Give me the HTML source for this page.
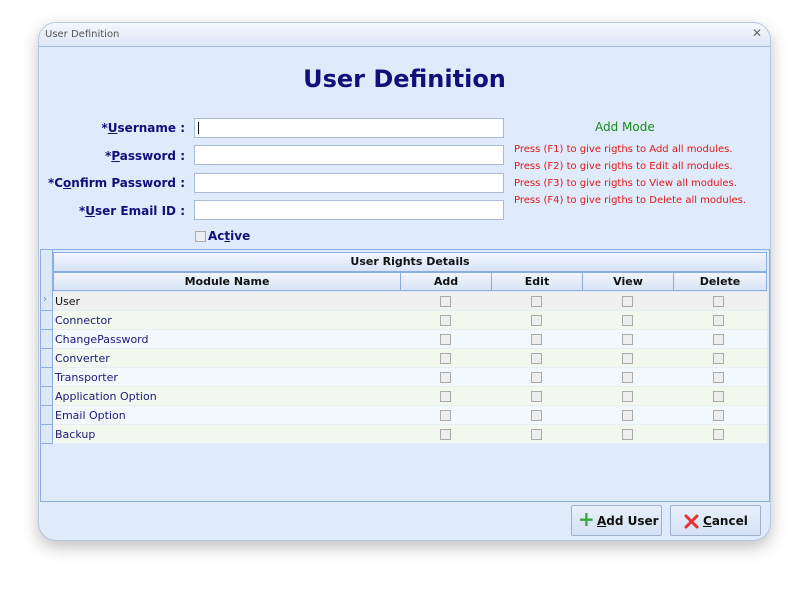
<!DOCTYPE html>
<html><head><style>
body{margin:0;width:809px;height:594px;background:#fff;font-family:"DejaVu Sans","Liberation Sans",sans-serif;position:relative;overflow:hidden}
.win{position:absolute;left:38px;top:22px;width:733px;height:519px;border-radius:18px;background:#dfeafb;box-shadow:0 6px 16px rgba(0,0,0,.25);overflow:hidden;border:1px solid #b8c8de;box-sizing:border-box}
.tb{position:absolute;left:0;top:0;right:0;height:23px;background:linear-gradient(#f4f8fd,#dbe6f5);font-size:10px;color:#555;border-bottom:1px solid #9fbde4}
.tb span{position:absolute;left:6px;top:6px}
.tb b{position:absolute;right:8px;top:3px;font-weight:normal;font-size:12px;color:#666}
.a{position:absolute}
.h1{left:0;width:100%;top:42px;text-align:center;font-size:24px;font-weight:bold;color:#10107a}
.lbl{font-size:12px;font-weight:bold;color:#10107a;text-align:right;width:150px;left:-4px}
.inp{left:155px;width:308px;height:18px;background:#fff;border:1px solid #a9bbd4}
.red{left:475px;font-size:10px;color:#e01818}
.grid{left:1px;top:226px;width:728px;height:251px;border:1px solid #8aaee0;background:#dfeafb}
.rh{position:absolute;left:0;top:0;width:11px;height:194px;background:#dce8f8;border-right:1px solid #8aaee0}
.hdr{position:absolute;background:linear-gradient(#f2f6fc,#d7e4f6);border:1px solid #8aaee0;box-sizing:border-box;font-size:11px;font-weight:bold;text-align:center;color:#111}
.row{position:absolute;left:12px;width:714px;height:19px;border-bottom:1px solid #e8eef6;box-sizing:border-box}
.row span{position:absolute;left:2px;top:3px;font-size:11px;color:#1a1a7a}
.cb{position:absolute;top:4px;width:9px;height:9px;border:1px solid #aaa;background:#eee}
.rm{position:absolute;left:0;width:11px;height:19px;border-bottom:1px solid #8aaee0;box-sizing:border-box;background:#dce8f8}
.btn{position:absolute;top:482px;width:91px;height:31px;border:1px solid #9fb2cc;border-radius:2px;background:linear-gradient(#e8f0fb,#d4e2f4);box-sizing:border-box;font-size:12px;font-weight:bold;color:#111}
</style></head><body>
<div class="win">
<div class="tb"><span>User Definition</span><b>✕</b></div>
<div class="a h1">User Definition</div>
<div class="a lbl" style="top:98px">*<u>U</u>sername :</div>
<div class="a lbl" style="top:126px">*<u>P</u>assword :</div>
<div class="a lbl" style="top:153px">*C<u>o</u>nfirm Password :</div>
<div class="a lbl" style="top:181px">*<u>U</u>ser Email ID :</div>
<div class="a inp" style="top:95px"><div style="position:absolute;left:3px;top:3px;width:1px;height:12px;background:#000"></div></div>
<div class="a inp" style="top:122px"></div>
<div class="a inp" style="top:150px"></div>
<div class="a inp" style="top:177px"></div>
<div class="a" style="left:156px;top:208px;width:9px;height:9px;border:1px solid #aaa;background:#eee"></div>
<div class="a" style="left:169px;top:206px;font-size:12px;font-weight:bold;color:#10107a">Ac<u>t</u>ive</div>
<div class="a" style="left:556px;top:97px;font-size:12px;color:#1a8a1a">Add Mode</div>
<div class="a red" style="top:121px">Press (F1) to give rigths to Add all modules.</div>
<div class="a red" style="top:138px">Press (F2) to give rigths to Edit all modules.</div>
<div class="a red" style="top:155px">Press (F3) to give rigths to View all modules.</div>
<div class="a red" style="top:172px">Press (F4) to give rigths to Delete all modules.</div>
<div class="a grid">
<div class="rh"></div>
<div class="hdr" style="left:12px;top:2px;width:714px;height:20px;line-height:18px">User Rights Details</div>
<div class="hdr" style="left:12px;top:22px;width:348px;height:19px;line-height:17px">Module Name</div>
<div class="hdr" style="left:359px;top:22px;width:92px;height:19px;line-height:17px">Add</div>
<div class="hdr" style="left:450px;top:22px;width:92px;height:19px;line-height:17px">Edit</div>
<div class="hdr" style="left:541px;top:22px;width:92px;height:19px;line-height:17px">View</div>
<div class="hdr" style="left:632px;top:22px;width:94px;height:19px;line-height:17px">Delete</div>
<div id="rows"></div>
</div>
<div class="btn" style="left:532px"><span style="position:absolute;left:6px;top:3px;color:#3aaa3a;font-size:20px;line-height:20px">+</span><span style="position:absolute;left:25px;top:8px"><u>A</u>dd User</span></div>
<div class="btn" style="left:631px"><svg style="position:absolute;left:13px;top:8px" width="15" height="15" viewBox="0 0 15 15"><path d="M2 2L13 13M13 2L2 13" stroke="#e83030" stroke-width="3" stroke-linecap="round"/></svg><span style="position:absolute;left:32px;top:8px"><u>C</u>ancel</span></div>
</div>
<script>
var n=["User","Connector","ChangePassword","Converter","Transporter","Application Option","Email Option","Backup"],h="";
n.forEach(function(t,i){var y=42+i*19;var bg=i==0?"#f0f0f0":(i%2?"#f2f8ee":"#f3f8fd");
h+='<div class="rm" style="top:'+y+'px">'+(i==0?'<span style="position:absolute;left:2px;top:2px;font-size:10px;color:#6a8ac0">›</span>':'')+'</div>';
h+='<div class="row" style="top:'+y+'px;background:'+bg+'"><span style="'+(i==0?'color:#111':'')+'">'+t+'</span>';
[404,495,586,677].forEach(function(x){h+='<div class="cb" style="left:'+(x-12-5)+'px"></div>'});
h+='</div>'});
document.getElementById("rows").innerHTML=h;
</script>
</body></html>
